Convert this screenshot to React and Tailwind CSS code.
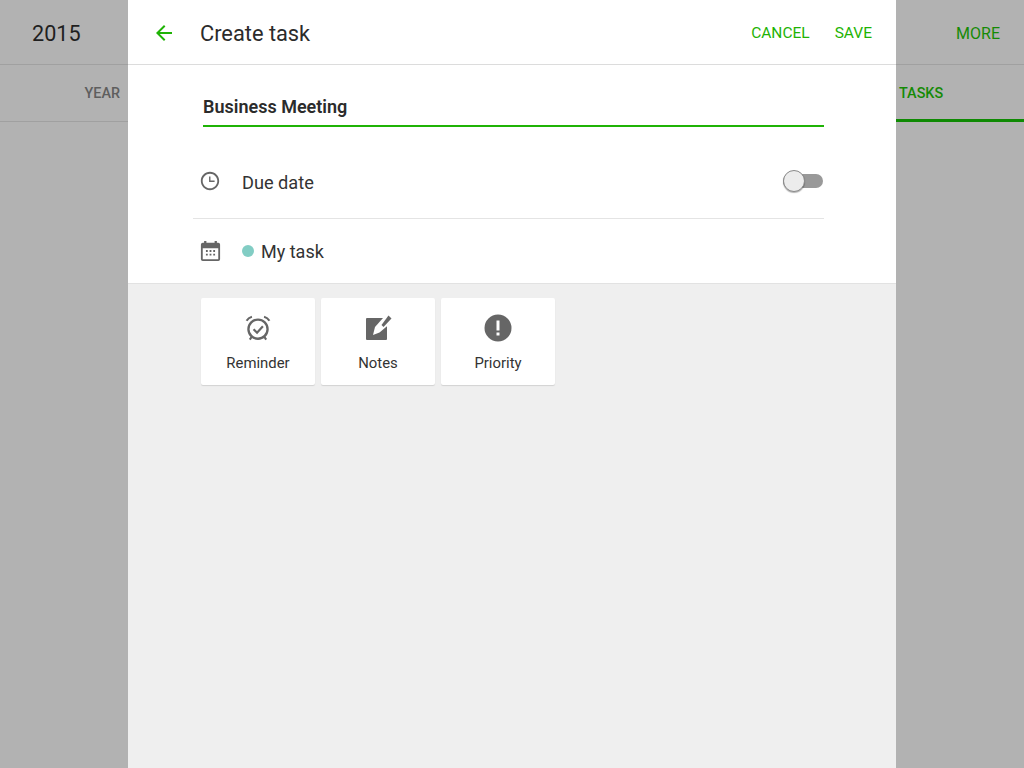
const font = { fontFamily: 'Roboto, sans-serif' }

function Card({ label, children }) {
  return (
    <div className="w-[114px] h-[87px] bg-white rounded-[2px] shadow-[0_1px_1px_rgba(0,0,0,0.12)] flex flex-col items-center pt-[16px]">
      <div className="h-[28px] w-[28px] flex items-center justify-center">{children}</div>
      <span className="mt-[7px] text-[14.9px] leading-[28px] text-[#333]">{label}</span>
    </div>
  )
}

export default function App() {
  return (
    <div className="flex h-[768px] w-[1024px] overflow-hidden bg-[#b2b2b2]" style={font}>
      {/* sinistra, dietro al dialog */}
      <div className="w-[128px] shrink-0">
        <div className="h-[65px] border-b border-[#a0a0a0] pl-[32px] pt-[4px] flex items-center text-[21.6px] text-[#1f1f1f]">2015</div>
        <div className="h-[57px] border-b border-[#a0a0a0] pr-[8px] pt-[2px] flex items-center justify-end text-[14.4px] font-medium text-[#5e5e5e]">YEAR</div>
      </div>

      {/* dialog */}
      <div className="w-[768px] shrink-0 bg-[#efefef] flex flex-col">
        <div className="bg-white border-b border-[#e2e2e2]">
          <div className="h-[65px] border-b border-[#dcdcdc] pt-[4px] flex items-center">
            <svg className="ml-[24px] mb-[2px] w-[24px] h-[24px]" viewBox="0 0 24 24" fill="#1fb305">
              <path d="M20 11H7.83l5.59-5.59L12 4l-8 8 8 8 1.41-1.41L7.83 13H20v-2z" />
            </svg>
            <span className="ml-[24px] text-[21.8px] text-[#2b2b2b]">Create task</span>
            <span className="ml-auto text-[15.5px] text-[#1fb305]">CANCEL</span>
            <span className="ml-[25px] mr-[24px] text-[15.5px] text-[#1fb305]">SAVE</span>
          </div>

          <div className="pl-[75px] pr-[72px] pt-[27px]">
            <div className="h-[35px] border-b-2 border-[#1fb305] text-[18px] font-semibold leading-[30px] text-[#2b2b2b]">Business Meeting</div>
          </div>

          <div className="ml-[65px] mr-[72px] mt-[18px] h-[74px] border-b border-[#e4e4e4] pt-[2px] flex items-center">
            <svg className="ml-[6px] mb-[3px] w-[22px] h-[22px]" viewBox="0 0 24 24" fill="#666">
              <path d="M11.99 2C6.47 2 2 6.48 2 12s4.47 10 9.99 10C17.52 22 22 17.52 22 12S17.52 2 11.99 2zM12 20c-4.42 0-8-3.58-8-8s3.58-8 8-8 8 3.58 8 8-3.58 8-8 8z" />
              <path d="M12.5 7H11v6h6v-1.5h-4.5z" />
            </svg>
            <span className="ml-[21px] text-[18.2px] text-[#333]">Due date</span>
            <div className="ml-auto mr-[1px] mb-[3px] relative w-[40px] h-[14px] rounded-full bg-[#999]">
              <div className="absolute left-0 top-[-4px] w-[22px] h-[22px] rounded-full bg-[#ececec] border border-[#8a8a8a] shadow-[0_1px_1px_rgba(0,0,0,0.3)]" />
            </div>
          </div>

          <div className="ml-[65px] h-[64px] flex items-center">
            <svg className="ml-[7px] mb-[1px] w-[21px] h-[22px]" viewBox="0 0 23 24" fill="#666">
              <path fillRule="evenodd" d="M4.500 1H7v2h9V1h2.500v2h1.500a2 2 0 0 1 2 2v16a2 2 0 0 1-2 2H3a2 2 0 0 1-2-2V5a2 2 0 0 1 2-2h1.500V1zM3 9v12h17V9H3z" />
              <path d="M6.500 11h2v2h-2zM10.500 11h2v2h-2zM14.500 11h2v2h-2zM6.500 15h2v2h-2zM10.500 15h2v2h-2zM14.500 15h2v2h-2z" />
            </svg>
            <span className="ml-[21px] mb-[1px] w-[12px] h-[12px] rounded-full bg-[#82cdc4]" />
            <span className="ml-[7px] text-[18px] text-[#333]">My task</span>
          </div>
        </div>

        <div className="ml-[73px] mt-[14px] flex gap-[6px]">
          <Card label="Reminder">
            <svg className="w-[28px] h-[28px]" viewBox="0 0 24 24" fill="none" stroke="#666">
              <circle cx="12" cy="13" r="8.200" strokeWidth="2" />
              <path d="M8.200 13l3 3 5-5.500" strokeWidth="1.900" />
              <path d="M2.200 5.800Q3.800 3.200 6.800 2.400M21.800 5.800Q20.200 3.200 17.200 2.400" strokeWidth="1.800" />
              <path d="M6.600 19.500 5 22M17.400 19.500 19 22" strokeWidth="1.800" />
            </svg>
          </Card>
          <Card label="Notes">
            <svg className="w-[28px] h-[28px]" viewBox="0 0 28 28" fill="#666">
              <rect x="2" y="4" width="21" height="22" rx="1" />
              <path d="M9 21 11 13 19 4H28V8L15.500 18.500z" fill="#fff" />
              <path d="M17.500 11 24.500 1.500 27.500 4.500 19.500 13z" />
            </svg>
          </Card>
          <Card label="Priority">
            <svg className="w-[28px] h-[28px]" viewBox="0 0 28 28" fill="#666">
              <path fillRule="evenodd" d="M14 .5a13.500 13.500 0 1 1 0 27 13.500 13.500 0 0 1 0-27zM12.500 6.500v10h3v-10zM12.500 18.500v3h3v-3z" />
            </svg>
          </Card>
        </div>
      </div>

      {/* destra, dietro al dialog */}
      <div className="w-[128px] shrink-0">
        <div className="h-[65px] border-b border-[#a0a0a0] pr-[24px] pt-[4px] flex items-center justify-end text-[16px] text-[#158a05]">MORE</div>
        <div className="h-[57px] border-b-[3px] border-[#0f8a03] pl-[3px] pt-[3px] flex items-center text-[14.4px] font-medium text-[#158a05]">TASKS</div>
      </div>
    </div>
  )
}
